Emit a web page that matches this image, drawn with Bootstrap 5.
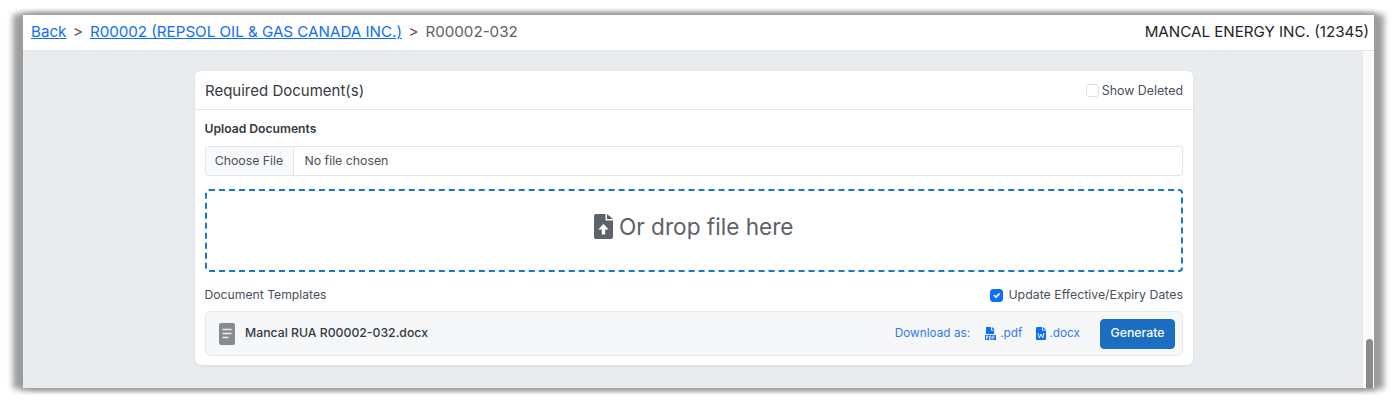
<!DOCTYPE html>
<html lang="en">
<head>
    <meta charset="UTF-8">
    <meta name="viewport" content="width=device-width, initial-scale=1.0">
    <title>Required Documents</title>
    <link rel="stylesheet" href="https://cdn.jsdelivr.net/npm/bootstrap@5.3.0/dist/css/bootstrap.min.css">
    <style>
        html, body { height: 403px; overflow: hidden; }
        body { background: #fff; padding: 15px 24px 15px 23px; font-family: Inter, "Liberation Sans", sans-serif; color: #212529; }
        a { color: #0d6efd; }
        .app-window { height: 373px; overflow: hidden; box-shadow: -9px 0 6px 1px #9c9c9c, 9px 0 6px 1px #9c9c9c, 0 0 5px 2px #a0a0a0; background: #e9ecef; }
        .top-bar { height: 36px; padding: 0 5px 0 8px; background: #fff; border-bottom: 1px solid #e3e6e9; font-size: 15.15px; }
        .crumb-sep { margin: 0 7px 0 6.5px; color: #555; }
        .crumb-now { color: #5c6268; }
        .main-area { height: 337px; }
        .scroll-track { width: 11px; background: #fbfbfb; padding: 0 1px 0 3px; }
        .scroll-thumb { height: 49px; background: #8a8a8a; border-radius: 4px 4px 0 0; }
        .doc-card { width: 998px; height: 294px; margin: 20px 0 0 172px; border: 0; border-radius: 6px; box-shadow: 0 1px 3px rgba(0,0,0,.08); overflow: hidden; }
        .doc-head { height: 39px; padding: 2px 10px 0; background: #fff; border-bottom: 1px solid #e3e6e9; }
        .doc-title { font-size: 15px; color: #343a40; }
        .doc-check { font-size: 12.4px; color: #495057; }
        .doc-check .form-check-input { width: 13px; height: 13px; margin: 0 3px 0 0; border-color: #dee2e6; border-radius: 3px; flex-shrink: 0; }
        .doc-check .form-check-input:checked { background-color: #0d6efd; border-color: #0d6efd; }
        .doc-body { padding: 11px 10px 0 9.5px; }
        .upload-label { font-size: 12.15px; font-weight: 600; line-height: 15px; margin-bottom: 10px; color: #343a40; }
        .file-field { height: 30px; border: 1px solid #e3e6e9; border-radius: 3px; font-size: 12.3px; color: #495057; }
        .file-btn { width: 88px; background: #f8f9fa; border-right: 1px solid #e3e6e9; }
        .file-none { padding-left: 11px; }
        .drop-zone { height: 83px; margin-top: 13px; padding-bottom: 8px; border: 2px dashed #1976d2; border-radius: 4px; font-size: 22.6px; color: #5c6268; gap: 6px; }
        .tpl-row { margin-top: 15px; height: 17px; }
        .tpl-label { font-size: 12.2px; color: #495057; }
        .tpl-check { font-size: 12.35px; }
        .tpl-check .form-check-input { margin-right: 5px; }
        .tpl-box { height: 45px; margin-top: 7px; padding: 0 7px 0 13.5px; background: #f6f7f9; border: 1px solid #e6e8eb; border-radius: 6px; }
        .tpl-name { font-size: 12.25px; font-weight: 500; margin-left: 10px; color: #343a40; }
        .dl-links { font-size: 11.8px; color: #2f7bf0; }
        .dl-text { margin-right: 15px; }
        .dl-link { color: #2f7bf0; text-decoration: none; gap: 4px; }
        .dl-pdf { margin-right: 14px; }
        .dl-docx { gap: 3px; }
        .gen-btn { width: 75px; height: 30px; padding: 0; margin-left: 20px; font-size: 12.3px; font-weight: 500; background: #1b6ec2; border-color: #1b6ec2; border-radius: 4px; }
    </style>
</head>
<body>
    <div class="app-window d-flex flex-column">
        <!-- Breadcrumb bar -->
        <div class="top-bar d-flex align-items-center justify-content-between">
            <div>
                <a href="#">Back</a><span class="crumb-sep">&gt;</span><a href="#">R00002 (REPSOL OIL &amp; GAS CANADA INC.)</a><span class="crumb-sep">&gt;</span><span class="crumb-now">R00002-032</span>
            </div>
            <div>MANCAL ENERGY INC. (12345)</div>
        </div>

        <div class="main-area d-flex">
            <div class="flex-grow-1">
                <div class="card doc-card">
                    <div class="doc-head d-flex align-items-center justify-content-between">
                        <span class="doc-title">Required Document(s)</span>
                        <label class="doc-check d-flex align-items-center">
                            <input class="form-check-input" type="checkbox"> Show Deleted
                        </label>
                    </div>
                    <div class="doc-body">
                        <div class="upload-label">Upload Documents</div>
                        <div class="file-field d-flex align-items-center">
                            <div class="file-btn h-100 d-flex align-items-center justify-content-center">Choose File</div>
                            <div class="file-none">No file chosen</div>
                        </div>

                        <div class="drop-zone d-flex align-items-center justify-content-center">
                            <svg width="19" height="25" viewBox="0 0 19 25">
                                <path fill="#5c6268" d="M2 0h9.5v6.5H19V23a2 2 0 0 1-2 2H2a2 2 0 0 1-2-2V2a2 2 0 0 1 2-2z"/>
                                <path fill="#5c6268" d="M13 0l6 5h-6z"/>
                                <path fill="#fff" d="M9.5 10l5.2 5.4h-3.5v5H7.8v-5H4.3z"/>
                            </svg>
                            <span>Or drop file here</span>
                        </div>

                        <div class="tpl-row d-flex align-items-center justify-content-between">
                            <span class="tpl-label">Document Templates</span>
                            <label class="doc-check tpl-check d-flex align-items-center">
                                <input class="form-check-input" type="checkbox" checked> Update Effective/Expiry Dates
                            </label>
                        </div>

                        <div class="tpl-box d-flex align-items-center">
                            <svg width="16" height="22" viewBox="0 0 16 22">
                                <rect width="16" height="22" rx="2" fill="#868b90"/>
                                <path stroke="#eceef0" stroke-width="1.5" d="M3.5 6.5h9M3.5 10.5h9M3.5 14.5h6"/>
                            </svg>
                            <span class="tpl-name">Mancal RUA R00002-032.docx</span>
                            <div class="dl-links ms-auto d-flex align-items-center">
                                <span class="dl-text">Download as:</span>
                                <a class="dl-link dl-pdf d-flex align-items-center" href="#">
                                    <svg width="11" height="13" viewBox="0 0 11 13">
                                        <path fill="#0d6efd" d="M1 0h5v3.5h3V7H1zM7 0l3 2.7H7zM0 8h11v5H0z"/>
                                        <path stroke="#fff" stroke-width=".8" fill="none" d="M1.5 12.5V9h1.3v1.6H1.5M4.5 12.5V9h1l.6.8v1.8l-.6.9zM7.8 12.5V9h2M7.8 10.6h1.6"/>
                                    </svg>
                                    .pdf
                                </a>
                                <a class="dl-link dl-docx d-flex align-items-center" href="#">
                                    <svg width="10" height="13" viewBox="0 0 10 13">
                                        <path fill="#0d6efd" d="M1 0h5v3.5h4V12a1 1 0 0 1-1 1H1a1 1 0 0 1-1-1V1a1 1 0 0 1 1-1zM7 0l3 2.7H7z"/>
                                        <path stroke="#fff" stroke-width=".9" fill="none" d="M2 6l1.3 5L5 7l1.7 4L8 6"/>
                                    </svg>
                                    .docx
                                </a>
                                <button type="button" class="btn btn-primary gen-btn">Generate</button>
                            </div>
                        </div>
                    </div>
                </div>
            </div>
            <div class="scroll-track d-flex flex-column justify-content-end">
                <div class="scroll-thumb"></div>
            </div>
        </div>
    </div>
    <script src="https://cdn.jsdelivr.net/npm/bootstrap@5.3.0/dist/js/bootstrap.bundle.min.js"></script>
</body>
</html>
